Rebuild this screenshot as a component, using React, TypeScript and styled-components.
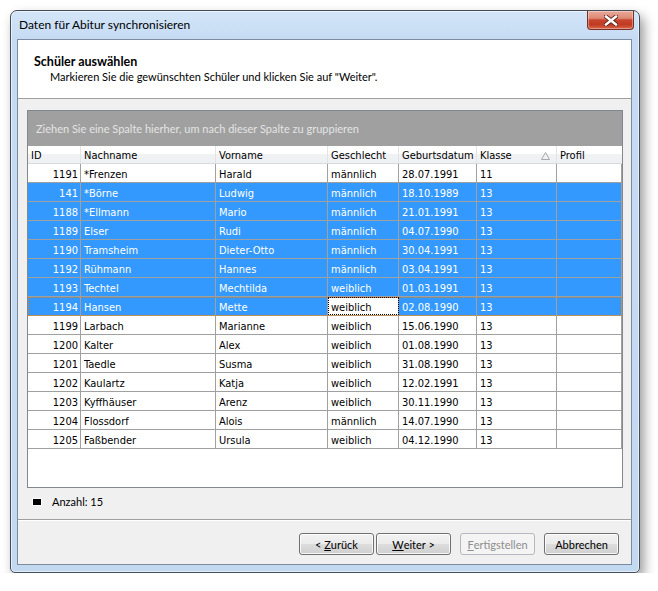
import React from "react";
import styled, { createGlobalStyle, css } from "styled-components";

const Global = createGlobalStyle`
  html, body { margin: 0; padding: 0; background: #ffffff; }
  body { font-family: Lato, "Noto Sans", sans-serif; }
`;

const UI = `Lato, "Noto Sans", sans-serif`;
const GRIDFONT = `"DejaVu Sans Condensed", "DejaVu Sans", sans-serif`;

const Window = styled.div`
  margin: 10px 0 0 10px;
  width: 630px;
  height: 563px;
  box-sizing: border-box;
  border: 1px solid #434c57;
  border-radius: 7px 7px 5px 5px;
  background: linear-gradient(180deg, #d3e5f8 0px, #c5dbf3 30px, #c3d9f2 100%);
  box-shadow: 4px 6px 12px rgba(0, 0, 0, 0.4), inset 0 0 0 1px rgba(255, 255, 255, 0.55);
  display: flex;
  flex-direction: column;
  padding: 0 7px 7px 6px;
`;

const TitleBar = styled.div`
  height: 28px;
  flex: none;
  display: flex;
  align-items: center;
  padding-left: 2px;
`;

const Title = styled.div`
  flex: 1;
  font-family: ${UI};
  font-size: 12px;
  color: #000;
  white-space: nowrap;
  padding-bottom: 1px;
`;

const CloseButton = styled.div`
  align-self: flex-start;
  width: 47px;
  height: 19px;
  box-sizing: border-box;
  margin-right: -2px;
  border: 1px solid #7a2e25;
  border-top: none;
  border-radius: 0 0 4px 4px;
  background: linear-gradient(180deg, #e9a99a 0%, #dd8a75 40%, #c8452d 50%, #c13a22 75%, #d6674a 100%);
  box-shadow: inset 0 0 0 1px rgba(255, 255, 255, 0.35);
  display: flex;
  align-items: center;
  justify-content: center;
`;

const Client = styled.div`
  flex: 1;
  min-height: 0;
  display: flex;
  flex-direction: column;
  border: 1px solid #7d8b9e;
  background: #f0f0f0;
`;

const Header = styled.div`
  height: 59px;
  flex: none;
  box-sizing: border-box;
  background: #ffffff;
  border-bottom: 1px solid #a0a0a0;
  padding: 14px 0 0 16px;
  font-family: ${UI};
  font-size: 11px;
  line-height: 15px;
  color: #000;
`;

const HeaderTitle = styled.div`
  font-weight: 700;
  font-size: 12.5px;
`;

const HeaderSub = styled.div`
  padding-left: 16px;
`;

const Body = styled.div`
  flex: none;
  padding: 11px 8px 0 9px;
`;

const Grid = styled.div`
  height: 378px;
  box-sizing: border-box;
  border: 1px solid #828790;
  background: #ffffff;
  display: flex;
  flex-direction: column;
`;

const GroupPanel = styled.div`
  height: 35px;
  flex: none;
  background: #a0a0a0;
  display: flex;
  align-items: center;
  padding-left: 8px;
  font-family: ${UI};
  font-size: 11px;
  color: #e4e4e4;
  white-space: nowrap;
`;

const COLS = "53px 135px 112px 71px 78px 80px 65px";

const HeadRow = styled.div`
  height: 18px;
  flex: none;
  box-sizing: border-box;
  display: grid;
  grid-template-columns: ${COLS};
  grid-template-rows: 17px;
  background: linear-gradient(180deg, #ffffff 0%, #ffffff 45%, #f1f2f4 50%, #eef0f3 100%);
  border-bottom: 1px solid #d8dade;
`;

const HeadCell = styled.div<{ $last?: boolean }>`
  font-family: ${GRIDFONT};
  font-size: 11px;
  line-height: 17px;
  color: #000;
  padding: 2px 3px 0;
  border-right: 1px solid ${(p) => (p.$last ? "transparent" : "#e2e3e6")};
  display: flex;
  align-items: center;
  justify-content: space-between;
  white-space: nowrap;
  overflow: hidden;
`;

const Row = styled.div<{ $selected?: boolean; $focused?: boolean }>`
  height: 19px;
  flex: none;
  box-sizing: border-box;
  display: grid;
  grid-template-columns: ${COLS};
  grid-template-rows: 18px;
  border-bottom: 1px solid #a0a0a0;
  background: ${(p) => (p.$selected ? "#3399ff" : "#ffffff")};
  color: ${(p) => (p.$selected ? "#ffffff" : "#000000")};
  ${(p) =>
    p.$focused &&
    css`
      outline: 1px dotted #d8801c;
      outline-offset: -1px;
    `}
`;

const Cell = styled.div<{ $align?: "right" | "left"; $focusCell?: boolean }>`
  font-family: ${GRIDFONT};
  font-size: 11px;
  line-height: 19px;
  padding: 1px 2px 0 3px;
  border-right: 1px solid #a0a0a0;
  text-align: ${(p) => p.$align || "left"};
  white-space: nowrap;
  overflow: hidden;
  ${(p) =>
    p.$focusCell &&
    css`
      background: #ffffff;
      color: #000000;
      outline: 1px dotted #000000;
      outline-offset: -1px;
    `}
`;

const Empty = styled.div`
  flex: 1;
`;

const Footer = styled.div`
  height: 31px;
  flex: none;
  box-sizing: border-box;
  padding: 6px 0 0 14px;
  display: flex;
  align-items: flex-start;
  gap: 10px;
  font-family: ${UI};
  font-size: 11px;
  line-height: 15px;
  color: #000;
`;

const Marker = styled.div`
  width: 8px;
  height: 6px;
  margin-top: 4px;
  background: #000;
  border: 1px solid #ffffff;
`;

const Separator = styled.div`
  height: 2px;
  flex: none;
  border-top: 1px solid #a0a0a0;
  border-bottom: 1px solid #ffffff;
  box-sizing: border-box;
`;

const ButtonBar = styled.div`
  flex: 1;
  display: flex;
  justify-content: flex-end;
  align-items: flex-start;
  padding: 12px 12px 0 0;
  gap: 9px;
`;

const ButtonPair = styled.div`
  display: flex;
  gap: 2px;
`;

const Button = styled.div<{ $disabled?: boolean }>`
  width: 75px;
  height: 22px;
  box-sizing: border-box;
  border: 1px solid ${(p) => (p.$disabled ? "#b5b9bd" : "#707070")};
  border-radius: 3px;
  background: ${(p) =>
    p.$disabled
      ? "#f4f4f4"
      : "linear-gradient(180deg, #f2f2f2 0%, #ebebeb 50%, #dddddd 51%, #cfcfcf 100%)"};
  box-shadow: inset 0 0 0 1px ${(p) => (p.$disabled ? "#f4f4f4" : "rgba(255,255,255,0.8)")};
  display: flex;
  align-items: center;
  justify-content: center;
  font-family: ${UI};
  font-size: 11px;
  color: ${(p) => (p.$disabled ? "#8d8d8d" : "#000")};
  white-space: nowrap;
`;

type Student = [string, string, string, string, string, string];

const rows: Student[] = [
  ["1191", "*Frenzen", "Harald", "männlich", "28.07.1991", "11"],
  ["141", "*Börne", "Ludwig", "männlich", "18.10.1989", "13"],
  ["1188", "*Ellmann", "Mario", "männlich", "21.01.1991", "13"],
  ["1189", "Elser", "Rudi", "männlich", "04.07.1990", "13"],
  ["1190", "Tramsheim", "Dieter-Otto", "männlich", "30.04.1991", "13"],
  ["1192", "Rühmann", "Hannes", "männlich", "03.04.1991", "13"],
  ["1193", "Techtel", "Mechtilda", "weiblich", "01.03.1991", "13"],
  ["1194", "Hansen", "Mette", "weiblich", "02.08.1990", "13"],
  ["1199", "Larbach", "Marianne", "weiblich", "15.06.1990", "13"],
  ["1200", "Kalter", "Alex", "weiblich", "01.08.1990", "13"],
  ["1201", "Taedle", "Susma", "weiblich", "31.08.1990", "13"],
  ["1202", "Kaulartz", "Katja", "weiblich", "12.02.1991", "13"],
  ["1203", "Kyffhäuser", "Arenz", "weiblich", "30.11.1990", "13"],
  ["1204", "Flossdorf", "Alois", "männlich", "14.07.1990", "13"],
  ["1205", "Faßbender", "Ursula", "weiblich", "04.12.1990", "13"],
];

const SortIcon = () => (
  <svg width="9" height="8" viewBox="0 0 9 8" style={{ marginRight: 3 }}>
    <polygon points="4.5,0.5 8.5,7.5 0.5,7.5" fill="none" stroke="#a8a8a8" strokeWidth="1" />
  </svg>
);

const CloseX = () => (
  <svg width="14" height="11" viewBox="0 0 14 11">
    <path d="M2 1.5 L12 9.5 M12 1.5 L2 9.5" stroke="#5a231c" strokeWidth="4.2" strokeLinecap="square" />
    <path d="M2 1.5 L12 9.5 M12 1.5 L2 9.5" stroke="#ffffff" strokeWidth="2.4" strokeLinecap="square" />
  </svg>
);

export default function App() {
  return (
    <>
      <Global />
      <Window>
        <TitleBar>
          <Title>Daten für Abitur synchronisieren</Title>
          <CloseButton>
            <CloseX />
          </CloseButton>
        </TitleBar>
        <Client>
          <Header>
            <HeaderTitle>Schüler auswählen</HeaderTitle>
            <HeaderSub>Markieren Sie die gewünschten Schüler und klicken Sie auf "Weiter".</HeaderSub>
          </Header>
          <Body>
            <Grid>
              <GroupPanel>Ziehen Sie eine Spalte hierher, um nach dieser Spalte zu gruppieren</GroupPanel>
              <HeadRow>
                <HeadCell>ID</HeadCell>
                <HeadCell>Nachname</HeadCell>
                <HeadCell>Vorname</HeadCell>
                <HeadCell>Geschlecht</HeadCell>
                <HeadCell>Geburtsdatum</HeadCell>
                <HeadCell>
                  Klasse
                  <SortIcon />
                </HeadCell>
                <HeadCell $last>Profil</HeadCell>
              </HeadRow>
              {rows.map((r, i) => {
                const selected = i >= 1 && i <= 7;
                const focused = i === 7;
                return (
                  <Row key={r[0]} $selected={selected} $focused={focused}>
                    <Cell $align="right">{r[0]}</Cell>
                    <Cell>{r[1]}</Cell>
                    <Cell>{r[2]}</Cell>
                    <Cell $focusCell={focused}>{r[3]}</Cell>
                    <Cell>{r[4]}</Cell>
                    <Cell>{r[5]}</Cell>
                    <Cell></Cell>
                  </Row>
                );
              })}
              <Empty />
            </Grid>
          </Body>
          <Footer>
            <Marker />
            <span>Anzahl: 15</span>
          </Footer>
          <Separator />
          <ButtonBar>
            <ButtonPair>
              <Button>
                &lt;&nbsp;<u>Z</u>urück
              </Button>
              <Button>
                <u>W</u>eiter &gt;
              </Button>
            </ButtonPair>
            <Button $disabled>
              <u>F</u>ertigstellen
            </Button>
            <Button>Abbrechen</Button>
          </ButtonBar>
        </Client>
      </Window>
    </>
  );
}
